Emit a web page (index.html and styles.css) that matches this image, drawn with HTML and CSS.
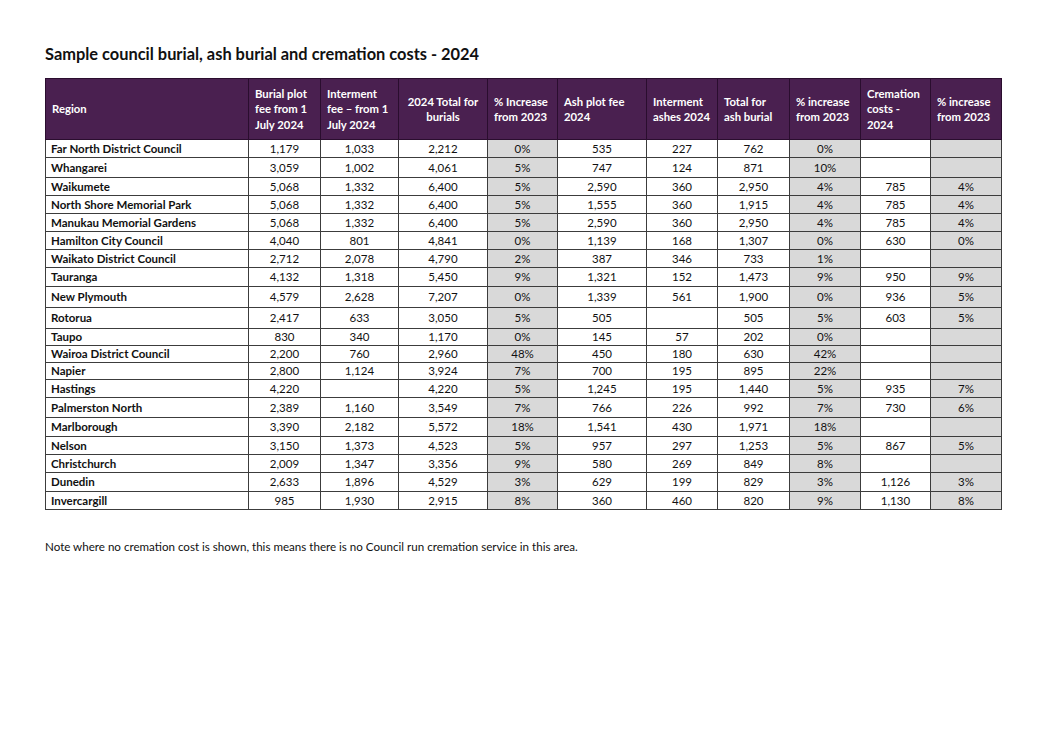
FILE: index.html
```html
<!DOCTYPE html>
<html>
<head>
<meta charset="utf-8">
<link rel="stylesheet" href="styles.css">
</head>
<body>
<div class="page">
  <h1 class="title">Sample council burial, ash burial and cremation costs - 2024</h1>
  <table class="costs">
    <colgroup>
      <col class="c-region"><col class="c72"><col class="c78"><col class="c89"><col class="c70"><col class="c89"><col class="c71"><col class="c72"><col class="c71"><col class="c70"><col class="c71">
    </colgroup>
    <thead>
      <tr>
        <th class="left">Region</th>
        <th class="left">Burial plot fee from 1 July 2024</th>
        <th class="left">Interment fee – from 1 July 2024</th>
        <th class="center">2024 Total for burials</th>
        <th class="left">% Increase from 2023</th>
        <th class="left">Ash plot fee 2024</th>
        <th class="left">Interment ashes 2024</th>
        <th class="left">Total for ash burial</th>
        <th class="left">% increase from 2023</th>
        <th class="left">Cremation costs - 2024</th>
        <th class="left">% increase from 2023</th>
      </tr>
    </thead>
    <tbody>
      <tr class="h18"><td>Far North District Council</td><td>1,179</td><td>1,033</td><td>2,212</td><td>0%</td><td>535</td><td>227</td><td>762</td><td>0%</td><td></td><td></td></tr>
      <tr class="h20"><td>Whangarei</td><td>3,059</td><td>1,002</td><td>4,061</td><td>5%</td><td>747</td><td>124</td><td>871</td><td>10%</td><td></td><td></td></tr>
      <tr class="h18"><td>Waikumete</td><td>5,068</td><td>1,332</td><td>6,400</td><td>5%</td><td>2,590</td><td>360</td><td>2,950</td><td>4%</td><td>785</td><td>4%</td></tr>
      <tr class="h18"><td>North Shore Memorial Park</td><td>5,068</td><td>1,332</td><td>6,400</td><td>5%</td><td>1,555</td><td>360</td><td>1,915</td><td>4%</td><td>785</td><td>4%</td></tr>
      <tr class="h18"><td>Manukau Memorial Gardens</td><td>5,068</td><td>1,332</td><td>6,400</td><td>5%</td><td>2,590</td><td>360</td><td>2,950</td><td>4%</td><td>785</td><td>4%</td></tr>
      <tr class="h18"><td>Hamilton City Council</td><td>4,040</td><td>801</td><td>4,841</td><td>0%</td><td>1,139</td><td>168</td><td>1,307</td><td>0%</td><td>630</td><td>0%</td></tr>
      <tr class="h18"><td>Waikato District Council</td><td>2,712</td><td>2,078</td><td>4,790</td><td>2%</td><td>387</td><td>346</td><td>733</td><td>1%</td><td></td><td></td></tr>
      <tr class="h19"><td>Tauranga</td><td>4,132</td><td>1,318</td><td>5,450</td><td>9%</td><td>1,321</td><td>152</td><td>1,473</td><td>9%</td><td>950</td><td>9%</td></tr>
      <tr class="h21"><td>New Plymouth</td><td>4,579</td><td>2,628</td><td>7,207</td><td>0%</td><td>1,339</td><td>561</td><td>1,900</td><td>0%</td><td>936</td><td>5%</td></tr>
      <tr class="h21"><td>Rotorua</td><td>2,417</td><td>633</td><td>3,050</td><td>5%</td><td>505</td><td></td><td>505</td><td>5%</td><td>603</td><td>5%</td></tr>
      <tr class="h17"><td>Taupo</td><td>830</td><td>340</td><td>1,170</td><td>0%</td><td>145</td><td>57</td><td>202</td><td>0%</td><td></td><td></td></tr>
      <tr class="h17"><td>Wairoa District Council</td><td>2,200</td><td>760</td><td>2,960</td><td>48%</td><td>450</td><td>180</td><td>630</td><td>42%</td><td></td><td></td></tr>
      <tr class="h17"><td>Napier</td><td>2,800</td><td>1,124</td><td>3,924</td><td>7%</td><td>700</td><td>195</td><td>895</td><td>22%</td><td></td><td></td></tr>
      <tr class="h18"><td>Hastings</td><td>4,220</td><td></td><td>4,220</td><td>5%</td><td>1,245</td><td>195</td><td>1,440</td><td>5%</td><td>935</td><td>7%</td></tr>
      <tr class="h20"><td>Palmerston North</td><td>2,389</td><td>1,160</td><td>3,549</td><td>7%</td><td>766</td><td>226</td><td>992</td><td>7%</td><td>730</td><td>6%</td></tr>
      <tr class="h19"><td>Marlborough</td><td>3,390</td><td>2,182</td><td>5,572</td><td>18%</td><td>1,541</td><td>430</td><td>1,971</td><td>18%</td><td></td><td></td></tr>
      <tr class="h18"><td>Nelson</td><td>3,150</td><td>1,373</td><td>4,523</td><td>5%</td><td>957</td><td>297</td><td>1,253</td><td>5%</td><td>867</td><td>5%</td></tr>
      <tr class="h18"><td>Christchurch</td><td>2,009</td><td>1,347</td><td>3,356</td><td>9%</td><td>580</td><td>269</td><td>849</td><td>8%</td><td></td><td></td></tr>
      <tr class="h19"><td>Dunedin</td><td>2,633</td><td>1,896</td><td>4,529</td><td>3%</td><td>629</td><td>199</td><td>829</td><td>3%</td><td>1,126</td><td>3%</td></tr>
      <tr class="h18"><td>Invercargill</td><td>985</td><td>1,930</td><td>2,915</td><td>8%</td><td>360</td><td>460</td><td>820</td><td>9%</td><td>1,130</td><td>8%</td></tr>
    </tbody>
  </table>
  <p class="note">Note where no cremation cost is shown, this means there is no Council run cremation service in this area.</p>
</div>
</body>
</html>
```
FILE: styles.css
```css
html, body {
  margin: 0;
  padding: 0;
  background: #ffffff;
}
body {
  font-family: Lato, "Open Sans", "Liberation Sans", sans-serif;
  color: #000;
}
.page {
  padding: 43px 0 0 45px;
}
.title {
  margin: 0 0 14px 0;
  font-size: 16.4px;
  font-weight: 700;
  line-height: 21px;
  color: #111;
}
.costs {
  border-collapse: collapse;
  table-layout: fixed;
  width: 956px;
  font-size: 11.5px;
}
.c-region { width: 203px; }
.c72 { width: 72px; }
.c78 { width: 78px; }
.c89 { width: 89px; }
.c70 { width: 70px; }
.c71 { width: 71px; }

.costs thead tr {
  height: 61px;
}
.costs th {
  background: #4a2050;
  color: #ffffff;
  font-size: 11.3px;
  font-weight: 700;
  line-height: 15.5px;
  padding: 0 6px;
  vertical-align: middle;
  border: 1px solid #2a0d2e;
}
.costs th.left { text-align: left; }
.costs th.center { text-align: center; }

.costs td {
  border: 1px solid #3c3c3c;
  padding: 0 5px;
  text-align: center;
  line-height: 14px;
  vertical-align: middle;
  color: #111;
}
.costs td:first-child {
  text-align: left;
  font-weight: 700;
}
.costs td:nth-child(5),
.costs td:nth-child(9),
.costs td:nth-child(11) {
  background: #d9d9d9;
}
.h17 { height: 17px; }
.h18 { height: 18px; }
.h19 { height: 19px; }
.h20 { height: 20px; }
.h21 { height: 21px; }

.note {
  margin: 30px 0 0 0;
  font-size: 11.6px;
  line-height: 14px;
  color: #111;
}
```
